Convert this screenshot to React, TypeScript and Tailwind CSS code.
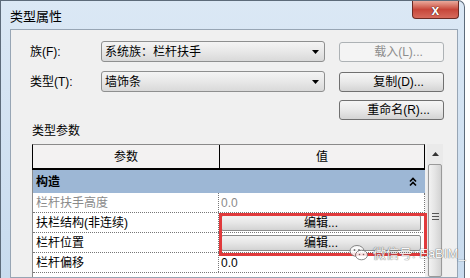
import * as React from 'react';

function WinButton({ label, disabled }: { label: string; disabled?: boolean }) {
  return (
    <div
      className={
        disabled
          ? 'flex h-[20px] w-[105px] items-center justify-center rounded-[3px] border border-[#adb2b5] bg-[#f4f4f4] text-[#8d8d8d]'
          : 'flex h-[20px] w-[105px] items-center justify-center rounded-[3px] border border-[#707070] bg-linear-to-b from-[#f6f6f6] via-[#e9e9e9] to-[#d4d4d4] text-black'
      }
    >
      <span className="pl-[14px]">{label}</span>
    </div>
  );
}

function Combo({ value }: { value: string }) {
  return (
    <div className="flex h-[21px] w-[224px] items-center justify-between rounded-[3px] border border-[#8e8f8f] bg-linear-to-b from-[#f4f4f4] via-[#e8e8e8] to-[#d9d9d9] pl-[3px] pr-[5px]">
      <span>{value}</span>
      <svg width="7" height="4" viewBox="0 0 7 4">
        <path d="M0 0h7L3.5 4z" fill="#000" />
      </svg>
    </div>
  );
}

function EditButton() {
  return (
    <div className="ml-[2px] flex h-[16px] w-[200px] items-center justify-center rounded-[2px] border border-[#8a8a8a] bg-linear-to-b from-[#f4f4f4] via-[#e6e6e6] to-[#d3d3d3] text-[12px]">
      编辑...
    </div>
  );
}

const rows = [
  { name: '栏杆扶手高度', value: '0.0', muted: true },
  { name: '扶栏结构(非连续)', edit: true },
  { name: '栏杆位置', edit: true },
  { name: '栏杆偏移', value: '0.0' },
];

export default function App() {
  return (
    <div className="relative h-[278px] w-[470px] overflow-hidden bg-white font-['Liberation_Sans','Noto_Sans_CJK_SC',sans-serif] text-[12px] leading-none text-black">
      {/* Window */}
      <div className="flex h-full w-[465px] flex-col rounded-tr-[7px] border-l border-r border-t border-[#5d6b7a] bg-linear-to-b from-[#dbe8f5] to-[#c8dbee]">
        {/* Title bar */}
        <div className="flex h-[28px] items-start justify-between">
          <span className="pl-[9px] pt-[9px] text-[13px]">类型属性</span>
          <div className="mr-[5px] flex h-[18px] w-[47px] items-center justify-center rounded-b-[4px] border border-t-0 border-[#6b2b24] bg-linear-to-b from-[#e9a99c] via-[#c7463a] to-[#d66a5c]">
            <span className="text-[14px] font-bold text-white [text-shadow:0_0_1px_#4a120c,0_0_1px_#4a120c]">x</span>
          </div>
        </div>

        {/* Frame + client */}
        <div className="flex flex-1 pl-[9px] pr-[6px]">
          <div className="flex flex-1 flex-col border border-[#97a5b4] bg-[#f0f0f0] pl-[19px]">
            <div className="mt-[11px] flex items-center">
              <span className="w-[71px]">族(F):</span>
              <Combo value="系统族：栏杆扶手" />
              <div className="ml-[14px]">
                <WinButton label="载入(L)..." disabled />
              </div>
            </div>
            <div className="mt-[9px] flex items-center">
              <span className="w-[71px]">类型(T):</span>
              <Combo value="墙饰条" />
              <div className="ml-[14px]">
                <WinButton label="复制(D)..." />
              </div>
            </div>
            <div className="ml-[309px] mt-[8px]">
              <WinButton label="重命名(R)..." />
            </div>

            <div className="ml-[2px] mt-[5px]">类型参数</div>

            <div className="ml-[2px] mt-[7px] flex flex-1">
              {/* Table */}
              <div className="flex w-[393px] flex-col bg-white">
                <div className="flex h-[26px] border-b-2 border-l border-r border-t border-b-black border-l-black border-r-black border-t-[#8a8a8a] bg-[#f3f2f2]">
                  <div className="flex w-[187px] items-center justify-center border-r border-black">参数</div>
                  <div className="flex flex-1 items-center justify-center">值</div>
                </div>
                <div className="flex flex-1 flex-col border-l border-[#8a8a8a]">
                  <div className="flex h-[23px] items-center justify-between bg-[#9db7d5] pl-[3px] pr-[8px]">
                    <span className="font-bold">构造</span>
                    <svg width="8" height="10" viewBox="0 0 8 10">
                      <path d="M1 4.5 4 1.5 7 4.5M1 8.5 4 5.5 7 8.5" fill="none" stroke="#000" strokeWidth="1.6" />
                    </svg>
                  </div>
                  {rows.map((r) => (
                    <div key={r.name} className="flex h-[20px] border-b border-r border-dotted border-[#777]">
                      <div className={'flex w-[186px] items-center border-r border-dotted border-[#777] pl-[3px] ' + (r.muted ? 'text-[#8a8a8a]' : '')}>
                        {r.name}
                      </div>
                      <div className={'flex flex-1 items-center ' + (r.muted ? 'text-[#8a8a8a]' : '')}>
                        {r.edit ? <EditButton /> : <span className="pl-[2px]">{r.value}</span>}
                      </div>
                    </div>
                  ))}
                </div>
              </div>

              {/* Scrollbar */}
              <div className="ml-[2px] flex w-[16px] flex-col bg-[#eaeaea]">
                <div className="flex h-[20px] items-center justify-center">
                  <svg width="7" height="4" viewBox="0 0 7 4">
                    <path d="M3.5 0 7 4H0z" fill="#333" />
                  </svg>
                </div>
                <div className="mx-[1px] flex flex-1 items-center justify-center rounded-[2px] border border-[#9a9a9a] bg-linear-to-r from-[#f2f2f2] via-[#e4e4e4] to-[#d2d2d2] pb-[8px]">
                  <div className="flex flex-col gap-[2px]">
                    <div className="h-px w-[7px] bg-[#555]" />
                    <div className="h-px w-[7px] bg-[#555]" />
                    <div className="h-px w-[7px] bg-[#555]" />
                  </div>
                </div>
              </div>
            </div>
          </div>
        </div>
      </div>

      {/* Red annotation box */}
      <div className="absolute left-[219px] top-[213px] h-[43px] w-[208px] border-[3px] border-[#e03a3c]" />

      {/* Watermark */}
      <div className="absolute left-[349px] top-[244px] flex items-center gap-[4px] opacity-85">
        <svg width="20" height="18" viewBox="0 0 20 18">
          <ellipse cx="8" cy="7" rx="7" ry="5.5" fill="#fff" stroke="#777" strokeWidth="1" />
          <ellipse cx="12.5" cy="11" rx="6" ry="4.8" fill="#fff" stroke="#777" strokeWidth="1" />
          <circle cx="5.5" cy="6" r="0.9" fill="#666" />
          <circle cx="10" cy="6" r="0.9" fill="#666" />
          <circle cx="10.5" cy="10.5" r="0.8" fill="#666" />
          <circle cx="14.5" cy="10.5" r="0.8" fill="#666" />
        </svg>
        <span className="text-[13px] text-white [text-shadow:0_0_1px_#555,0_0_1px_#555]">微信号: EaBIM_</span>
      </div>
    </div>
  );
}
